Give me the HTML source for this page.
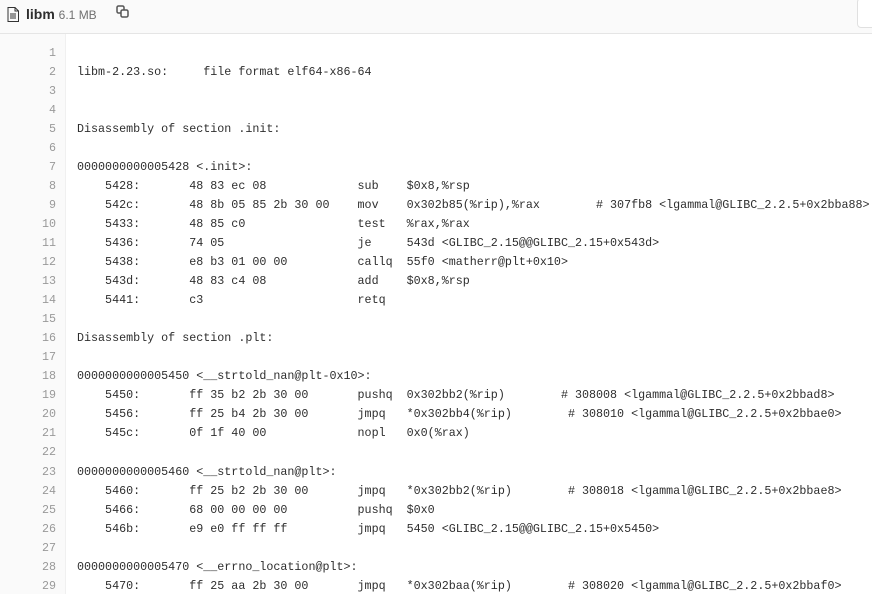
<!DOCTYPE html>
<html><head><meta charset="utf-8"><style>
*{margin:0;padding:0;box-sizing:border-box}
body{width:872px;height:594px;overflow:hidden;background:#fff;font-family:"Liberation Sans",sans-serif;position:relative}
.hdr{position:absolute;left:0;top:0;width:872px;height:34px;background:#fafafa;border-bottom:1px solid #e5e5e5}
.name{position:absolute;left:26px;top:6px;font-size:14px;font-weight:bold;color:#2e2e2e}
.size{font-weight:normal;font-size:12px;color:#707070}
.box{position:absolute;left:857px;top:-2px;width:30px;height:30px;border:1px solid #e0e0e0;border-radius:4px;background:#fff}
.gut{position:absolute;left:0;top:34px;width:66px;height:560px;background:#fafafa;border-right:1px solid #f0f0f0}
pre{position:absolute;top:43.5px;font-family:"Liberation Mono",monospace;font-size:11.7px;line-height:19.04px;color:#2e2e2e}
.ln{left:0;width:56px;text-align:right;color:#999}
.code{left:77px}
</style></head><body>
<div class="hdr">
<svg style="position:absolute;left:7px;top:7px" width="12" height="15" viewBox="0 0 12 15"><path d="M1 .5h7l3.5 3.5v10.5h-10.5z M8 .5v3.5h3.5" fill="none" stroke="#333"/><path d="M3 7h6M3 9h6M3 11h6" stroke="#333"/></svg>
<div class="name">libm <span class="size">6.1 MB</span></div>
<svg style="position:absolute;left:116px;top:5px" width="13" height="13" viewBox="0 0 13 13"><rect x="1" y="1" width="7" height="7" rx="1.5" fill="none" stroke="#555" stroke-width="1.5"/><rect x="5" y="5" width="7" height="7" rx="1.5" fill="#fafafa" stroke="#555" stroke-width="1.5"/></svg>
<div class="box"></div>
</div>
<div class="gut"></div>
<pre class="ln">1
2
3
4
5
6
7
8
9
10
11
12
13
14
15
16
17
18
19
20
21
22
23
24
25
26
27
28
29</pre>
<pre class="code">

libm-2.23.so:     file format elf64-x86-64


Disassembly of section .init:

0000000000005428 &lt;.init&gt;:
    5428:	48 83 ec 08          	sub    $0x8,%rsp
    542c:	48 8b 05 85 2b 30 00 	mov    0x302b85(%rip),%rax        # 307fb8 &lt;lgammal@GLIBC_2.2.5+0x2bba88&gt;
    5433:	48 85 c0             	test   %rax,%rax
    5436:	74 05                	je     543d &lt;GLIBC_2.15@@GLIBC_2.15+0x543d&gt;
    5438:	e8 b3 01 00 00       	callq  55f0 &lt;matherr@plt+0x10&gt;
    543d:	48 83 c4 08          	add    $0x8,%rsp
    5441:	c3                   	retq   

Disassembly of section .plt:

0000000000005450 &lt;__strtold_nan@plt-0x10&gt;:
    5450:	ff 35 b2 2b 30 00    	pushq  0x302bb2(%rip)        # 308008 &lt;lgammal@GLIBC_2.2.5+0x2bbad8&gt;
    5456:	ff 25 b4 2b 30 00    	jmpq   *0x302bb4(%rip)        # 308010 &lt;lgammal@GLIBC_2.2.5+0x2bbae0&gt;
    545c:	0f 1f 40 00          	nopl   0x0(%rax)

0000000000005460 &lt;__strtold_nan@plt&gt;:
    5460:	ff 25 b2 2b 30 00    	jmpq   *0x302bb2(%rip)        # 308018 &lt;lgammal@GLIBC_2.2.5+0x2bbae8&gt;
    5466:	68 00 00 00 00       	pushq  $0x0
    546b:	e9 e0 ff ff ff       	jmpq   5450 &lt;GLIBC_2.15@@GLIBC_2.15+0x5450&gt;

0000000000005470 &lt;__errno_location@plt&gt;:
    5470:	ff 25 aa 2b 30 00    	jmpq   *0x302baa(%rip)        # 308020 &lt;lgammal@GLIBC_2.2.5+0x2bbaf0&gt;
</pre>
</body></html>
